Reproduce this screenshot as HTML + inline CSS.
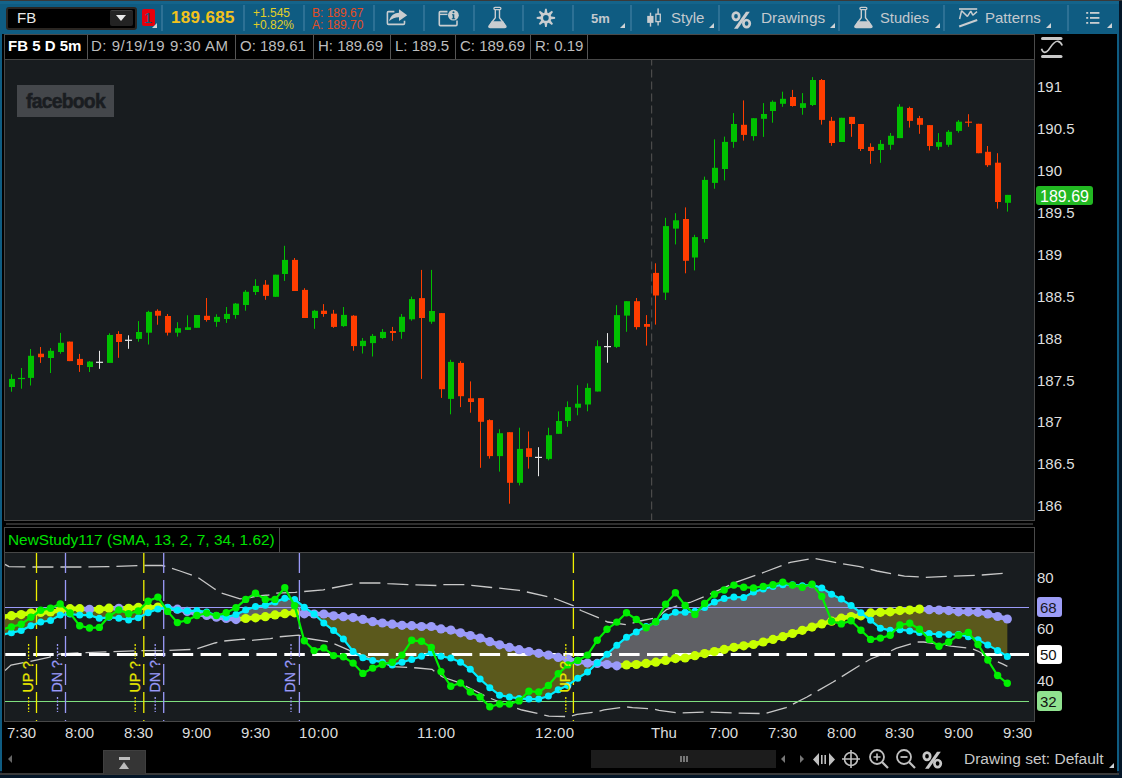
<!DOCTYPE html>
<html><head><meta charset="utf-8">
<style>
*{box-sizing:border-box}
html,body{margin:0;padding:0}
body{width:1122px;height:778px;overflow:hidden;position:relative;background:#041628;font-family:"Liberation Sans",sans-serif}
.a{position:absolute}
.sep{position:absolute;top:5px;width:1.5px;height:26px;background:#2d7195}
.tt{position:absolute;color:#c3c9ce;font-size:15px;white-space:nowrap}
.tri{position:absolute;width:0;height:0;border-left:5px solid transparent;border-bottom:5px solid #cfd3d6}
.cell{position:absolute;top:35px;height:24px;border-right:1px solid #555;color:#bdbdbd;font-size:15px;line-height:22px;white-space:nowrap;padding-left:4px}
.pl{position:absolute;left:1037px;color:#dedede;font-size:15px;white-space:nowrap;line-height:15px}
.tl{position:absolute;top:725px;color:#dcdcdc;font-size:15px;white-space:nowrap;line-height:15px}
</style></head><body>
<!-- top line -->
<div class="a" style="left:0;top:0;width:1122px;height:1px;background:#3a3a3a"></div>
<!-- toolbar -->
<div class="a" style="left:0;top:1px;width:1119px;height:33px;background:#0f5c82"></div>
<div class="a" style="left:0;top:1px;width:1119px;height:3px;background:#14648b"></div>
<!-- main black frame -->
<div class="a" style="left:0;top:34px;width:1119px;height:737px;background:#0f5c82"></div>
<div class="a" style="left:2px;top:34px;width:1115px;height:739px;background:#000"></div>
<div class="a" style="left:0;top:773px;width:1119px;height:2px;background:#3a3a3a"></div>
<div class="a" style="left:0;top:775px;width:1122px;height:3px;background:#041628"></div>

<!-- symbol box -->
<div class="a" style="left:6px;top:7px;width:131px;height:23px;background:#000;border:2px solid #2a2622;border-radius:3px"></div>
<div class="tt" style="left:17px;top:9px;color:#e8e8e8;font-size:15px;line-height:18px">FB</div>
<div class="a" style="left:110px;top:10px;width:23px;height:16px;background:#232323;border-top:1.5px solid #3c3c3c;border-radius:2px"></div>
<div class="a" style="left:116px;top:15px;width:0;height:0;border-left:5.5px solid transparent;border-right:5.5px solid transparent;border-top:6px solid #e8e8e8"></div>
<!-- red badge -->
<div class="a" style="left:142px;top:9px;width:13px;height:17px;background:#e8000c;border-radius:2px"></div>
<div class="a" style="left:144px;top:9px;font-size:15px;line-height:17px;color:#0f5c82">1</div>
<div class="tri" style="left:152px;top:23px;border-left-width:5px;border-bottom-width:5px"></div>
<div class="sep" style="left:161px"></div>
<div class="tt" style="left:171px;top:8px;color:#f2c21c;font-size:17px;font-weight:bold;line-height:20px;letter-spacing:0.35px">189.685</div>
<div class="sep" style="left:243px"></div>
<div class="tt" style="left:253px;top:7px;color:#e2cf26;font-size:12px;line-height:12px">+1.545</div>
<div class="tt" style="left:253px;top:19px;color:#e2cf26;font-size:12px;line-height:12px">+0.82%</div>
<div class="sep" style="left:303px"></div>
<div class="tt" style="left:312px;top:7px;color:#e44c24;font-size:12px;line-height:12px">B: 189.67</div>
<div class="tt" style="left:312px;top:19px;color:#e44c24;font-size:12px;line-height:12px">A: 189.70</div>
<div class="sep" style="left:373px"></div>
<!-- share icon -->
<svg class="a" style="left:380px;top:4px" width="34" height="26" viewBox="380 4 34 26">
<path d="M394.4 11.6 H388.5 Q387.4 11.6 387.4 12.7 V23.3 Q387.4 24.4 388.5 24.4 H403.4 Q404.5 24.4 404.5 23.3 V20.8" fill="none" stroke="#c9cdd0" stroke-width="1.6"/>
<path d="M389 21.2 C390.5 15.5 394.5 12.8 399 12.8 L399 9.3 L407.2 15.2 L399 21 L399 17.2 C395 17.2 392 18.3 389 21.2 Z" fill="#c9cdd0"/>
</svg>
<div class="sep" style="left:423px"></div>
<!-- info window icon -->
<svg class="a" style="left:434px;top:4px" width="30" height="26" viewBox="434 4 30 26">
<path d="M447.5 11.6 H440.4 Q439.3 11.6 439.3 12.7 V24.5 Q439.3 25.6 440.4 25.6 H455.9 Q457 25.6 457 24.5 V20.5" fill="none" stroke="#c9cdd0" stroke-width="1.6"/>
<path d="M439.3 14.4 H447.5" stroke="#c9cdd0" stroke-width="1.4"/>
<circle cx="453.4" cy="15.2" r="5.4" fill="#c9cdd0"/>
<circle cx="453.5" cy="12.2" r="1" fill="#0f5c82"/>
<path d="M452 14.2 H454.3 V18.2 H455.2 V19.3 H451.8 V18.2 H452.7 V15.3 H452 Z" fill="#0f5c82"/>
</svg>
<div class="sep" style="left:473px"></div>
<!-- flask -->
<svg class="a" style="left:486px;top:5px" width="22" height="24" viewBox="486 5 22 24">
<path d="M495.3 9.6 V17.8 L489 26 Q488.3 27.6 490.2 27.6 H504.6 Q506.5 27.6 505.8 26 L499.5 17.8 V9.6" fill="none" stroke="#c9cdd0" stroke-width="1.4"/>
<rect x="493.9" y="7.3" width="7" height="2.3" rx="1.15" fill="none" stroke="#c9cdd0" stroke-width="1.3"/>
<path d="M491.6 21.2 H503.2 L505.8 26 Q506.5 27.6 504.6 27.6 H490.2 Q488.3 27.6 489 26 Z" fill="#c9cdd0"/>
</svg>
<div class="sep" style="left:522px"></div>
<!-- gear -->
<svg class="a" style="left:534px;top:6px" width="24" height="24" viewBox="534 6 24 24">
<polygon points="549.90,19.60 555.10,18.70 555.10,17.10 549.90,16.20" fill="#c9cdd0"/><polygon points="547.53,21.93 551.84,24.97 552.97,23.84 549.93,19.53" fill="#c9cdd0"/><polygon points="544.20,21.90 545.10,27.10 546.70,27.10 547.60,21.90" fill="#c9cdd0"/><polygon points="541.87,19.53 538.83,23.84 539.96,24.97 544.27,21.93" fill="#c9cdd0"/><polygon points="541.90,16.20 536.70,17.10 536.70,18.70 541.90,19.60" fill="#c9cdd0"/><polygon points="544.27,13.87 539.96,10.83 538.83,11.96 541.87,16.27" fill="#c9cdd0"/><polygon points="547.60,13.90 546.70,8.70 545.10,8.70 544.20,13.90" fill="#c9cdd0"/><polygon points="549.93,16.27 552.97,11.96 551.84,10.83 547.53,13.87" fill="#c9cdd0"/>
<circle cx="545.9" cy="17.9" r="4.1" fill="none" stroke="#c9cdd0" stroke-width="2.6"/>
</svg>
<div class="sep" style="left:572px"></div>
<div class="tt" style="left:591px;top:12px;font-size:13px;font-weight:bold;line-height:14px">5m</div>
<div class="tri" style="left:620px;top:23px"></div>
<div class="sep" style="left:630px"></div>
<!-- candle icon -->
<svg class="a" style="left:644px;top:6px" width="20" height="22" viewBox="644 6 20 22">
<rect x="647.2" y="15.9" width="6.3" height="7" fill="#c9cdd0"/><rect x="649.8" y="12.7" width="1.4" height="13.9" fill="#c9cdd0"/>
<rect x="655.9" y="14.2" width="4.4" height="7.4" fill="none" stroke="#c9cdd0" stroke-width="1.3"/><rect x="657.4" y="8.4" width="1.4" height="5.8" fill="#c9cdd0"/><rect x="657.4" y="21.6" width="1.4" height="3.9" fill="#c9cdd0"/>
</svg>
<div class="tt" style="left:671px;top:9px;line-height:18px;font-size:15px">Style</div>
<div class="tri" style="left:709px;top:23px"></div>
<div class="sep" style="left:718px"></div>
<svg class="a" style="left:731px;top:11px" width="22" height="19" viewBox="0 0 22 19">
<ellipse cx="5" cy="5.2" rx="3.2" ry="3.6" fill="none" stroke="#c9cdd0" stroke-width="2.7"/>
<ellipse cx="15.6" cy="12.6" rx="3.2" ry="3.6" fill="none" stroke="#c9cdd0" stroke-width="2.7"/>
<path d="M15 0.8 L18.8 0.8 L6.8 17.8 L3 17.8 Z" fill="#c9cdd0"/>
</svg>
<div class="tt" style="left:761px;top:9px;line-height:18px;font-size:15.4px">Drawings</div>
<div class="tri" style="left:830px;top:23px"></div>
<div class="sep" style="left:838px"></div>
<svg class="a" style="left:852px;top:5px" width="22" height="24" viewBox="486 5 22 24">
<path d="M495.3 9.6 V17.8 L489 26 Q488.3 27.6 490.2 27.6 H504.6 Q506.5 27.6 505.8 26 L499.5 17.8 V9.6" fill="none" stroke="#c9cdd0" stroke-width="1.4"/>
<rect x="493.9" y="7.3" width="7" height="2.3" rx="1.15" fill="none" stroke="#c9cdd0" stroke-width="1.3"/>
<path d="M491.6 21.2 H503.2 L505.8 26 Q506.5 27.6 504.6 27.6 H490.2 Q488.3 27.6 489 26 Z" fill="#c9cdd0"/>
</svg>
<div class="tt" style="left:880px;top:9px;line-height:18px;font-size:14.7px">Studies</div>
<div class="tri" style="left:935px;top:23px"></div>
<div class="sep" style="left:943px"></div>
<!-- patterns icon -->
<svg class="a" style="left:956px;top:6px" width="24" height="24" viewBox="956 6 24 24">
<path d="M959 9 H977.2" stroke="#c9cdd0" stroke-width="1.6"/>
<path d="M959.6 19 L961.6 10.8 L967.4 16.4 L970.8 11.2 L972.8 15.2 L977 11.6" fill="none" stroke="#c9cdd0" stroke-width="1.5" stroke-linejoin="bevel"/>
<path d="M959.2 26.6 L977.2 20" stroke="#c9cdd0" stroke-width="2.1"/>
</svg>
<div class="tt" style="left:985px;top:9px;line-height:18px;font-size:15px">Patterns</div>
<div class="tri" style="left:1046px;top:23px"></div>
<div class="sep" style="left:1067px"></div>
<svg class="a" style="left:1084px;top:10px" width="18" height="16" viewBox="1084 10 18 16">
<g fill="#c9cdd0"><rect x="1086.2" y="12" width="2" height="1.8"/><rect x="1090" y="12" width="9.4" height="1.8"/>
<rect x="1086.2" y="17" width="2" height="1.8"/><rect x="1090" y="17" width="9.4" height="1.8"/>
<rect x="1086.2" y="22" width="2" height="1.8"/><rect x="1090" y="22" width="9.4" height="1.8"/></g>
</svg>
<div class="tri" style="left:1107px;top:23px"></div>

<!-- info bar -->
<div class="a" style="left:4px;top:34px;width:1031px;height:26px;border:1px solid #4a4a4a;background:#000"></div>
<div class="cell" style="left:5px;width:83px;color:#fff;font-weight:bold;padding-left:3px">FB 5 D 5m</div>
<div class="cell" style="left:88px;width:148px;letter-spacing:0.5px;padding-left:3px">D: 9/19/19 9:30 AM</div>
<div class="cell" style="left:236px;width:78px">O: 189.61</div>
<div class="cell" style="left:314px;width:77px">H: 189.69</div>
<div class="cell" style="left:391px;width:65px">L: 189.5</div>
<div class="cell" style="left:456px;width:75px">C: 189.69</div>
<div class="cell" style="left:531px;width:57px">R: 0.19</div>
<!-- right icon -->
<svg class="a" style="left:1039px;top:35px" width="26" height="25" viewBox="0 0 26 25">
<rect x="2" y="2" width="21.5" height="3" rx="1.5" fill="#c8c8c8"/>
<rect x="2" y="20" width="21.5" height="3" rx="1.5" fill="#c8c8c8"/>
<path d="M2.5 13.8 C4 18.5 7 18 9.5 15 C12.5 11 15 5.5 19 6.3 C21.3 6.8 22.5 8.5 23.2 10.5" fill="none" stroke="#c8c8c8" stroke-width="1.7"/>
</svg>

<!-- price chart -->
<div class="a" style="left:4px;top:59px;width:1031px;height:462px;background:#181c1f;border:1px solid #474747"></div>
<div class="a" style="left:17px;top:85px;width:97px;height:32px;background:#44474b"></div>
<div class="a" style="left:26px;top:89px;font-size:21px;font-weight:bold;color:#1a1d21;letter-spacing:-0.8px;line-height:24px;transform:scaleX(0.92);transform-origin:0 0;-webkit-text-stroke:0.6px #1a1d21">facebook</div>

<!-- price labels -->
<div class="pl" style="top:79px">191</div>
<div class="pl" style="top:121px">190.5</div>
<div class="pl" style="top:163px">190</div>
<div class="pl" style="top:205px">189.5</div>
<div class="pl" style="top:247px">189</div>
<div class="pl" style="top:289px">188.5</div>
<div class="pl" style="top:331px">188</div>
<div class="pl" style="top:373px">187.5</div>
<div class="pl" style="top:414px">187</div>
<div class="pl" style="top:456px">186.5</div>
<div class="pl" style="top:498px">186</div>
<div class="a" style="left:1036px;top:186px;width:57px;height:19px;background:#22b822;border-radius:3px"></div>
<div class="pl" style="top:189px;left:1040px;color:#fff;font-size:16px;line-height:16px">189.69</div>

<!-- splitter -->
<div class="a" style="left:6px;top:523px;width:1027px;height:2px;background:#2e2e2e"></div>
<!-- study header -->
<div class="a" style="left:4px;top:527px;width:1031px;height:26px;border:1px solid #4a4a4a;background:#000"></div>
<div class="a" style="left:279px;top:528px;width:1px;height:24px;background:#4a4a4a"></div>
<div class="a" style="left:8px;top:531px;color:#00e000;font-size:15.4px;line-height:18px;white-space:nowrap">NewStudy117 (SMA, 13, 2, 7, 34, 1.62)</div>
<!-- study area -->
<div class="a" style="left:4px;top:552px;width:1031px;height:170px;background:#181c1f;border:1px solid #474747"></div>

<svg class="a" style="left:0;top:0" width="1122" height="778" viewBox="0 0 1122 778">
<line x1="651.6" y1="60" x2="651.6" y2="520" stroke="#4a4a4a" stroke-width="1.2" stroke-dasharray="8 4" stroke-dashoffset="2.5"/>
<rect x="11" y="374.2" width="1" height="17.5" fill="#00c000"/>
<rect x="9" y="378.9" width="6" height="8.1" fill="#00c000"/>
<rect x="21" y="368.0" width="1" height="20.7" fill="#00c000"/>
<rect x="18" y="377.9" width="7" height="1.2" fill="#00c000"/>
<rect x="30" y="349.0" width="1" height="36.5" fill="#00c000"/>
<rect x="28" y="355.8" width="6" height="22.1" fill="#00c000"/>
<rect x="40" y="347.0" width="1" height="15.9" fill="#ff3d00"/>
<rect x="38" y="353.7" width="6" height="3.5" fill="#ff3d00"/>
<rect x="50" y="348.0" width="1" height="25.0" fill="#00c000"/>
<rect x="48" y="350.8" width="6" height="7.2" fill="#00c000"/>
<rect x="60" y="332.9" width="1" height="20.8" fill="#00c000"/>
<rect x="58" y="342.8" width="6" height="9.2" fill="#00c000"/>
<rect x="69" y="341.6" width="1" height="19.5" fill="#ff3d00"/>
<rect x="67" y="341.6" width="6" height="19.5" fill="#ff3d00"/>
<rect x="79" y="353.9" width="1" height="18.0" fill="#ff3d00"/>
<rect x="77" y="358.9" width="6" height="6.1" fill="#ff3d00"/>
<rect x="89" y="361.0" width="1" height="11.0" fill="#00c000"/>
<rect x="87" y="361.6" width="6" height="5.4" fill="#00c000"/>
<rect x="99" y="350.8" width="1" height="18.0" fill="#e8e8e8"/>
<rect x="96" y="361.7" width="7" height="1.2" fill="#e8e8e8"/>
<rect x="109" y="333.3" width="1" height="29.6" fill="#00c000"/>
<rect x="107" y="335.0" width="6" height="27.9" fill="#00c000"/>
<rect x="118" y="331.2" width="1" height="26.6" fill="#ff3d00"/>
<rect x="116" y="334.0" width="6" height="8.0" fill="#ff3d00"/>
<rect x="128" y="335.3" width="1" height="13.5" fill="#e8e8e8"/>
<rect x="125" y="339.7" width="7" height="1.2" fill="#e8e8e8"/>
<rect x="138" y="321.1" width="1" height="20.6" fill="#00c000"/>
<rect x="136" y="332.0" width="6" height="6.9" fill="#00c000"/>
<rect x="148" y="310.8" width="1" height="33.7" fill="#00c000"/>
<rect x="146" y="311.9" width="6" height="20.8" fill="#00c000"/>
<rect x="157" y="309.3" width="1" height="15.4" fill="#ff3d00"/>
<rect x="155" y="310.8" width="6" height="4.9" fill="#ff3d00"/>
<rect x="167" y="314.0" width="1" height="21.5" fill="#ff3d00"/>
<rect x="165" y="316.0" width="6" height="16.7" fill="#ff3d00"/>
<rect x="177" y="322.2" width="1" height="14.4" fill="#00c000"/>
<rect x="175" y="328.2" width="6" height="4.5" fill="#00c000"/>
<rect x="187" y="315.3" width="1" height="14.6" fill="#00c000"/>
<rect x="185" y="327.3" width="6" height="2.6" fill="#00c000"/>
<rect x="196" y="315.0" width="1" height="12.8" fill="#00c000"/>
<rect x="194" y="315.0" width="6" height="12.8" fill="#00c000"/>
<rect x="206" y="298.0" width="1" height="23.6" fill="#ff3d00"/>
<rect x="204" y="315.8" width="6" height="4.2" fill="#ff3d00"/>
<rect x="216" y="314.3" width="1" height="12.5" fill="#00c000"/>
<rect x="214" y="316.9" width="6" height="5.0" fill="#00c000"/>
<rect x="226" y="307.0" width="1" height="15.9" fill="#00c000"/>
<rect x="224" y="313.9" width="6" height="5.1" fill="#00c000"/>
<rect x="235" y="303.0" width="1" height="15.7" fill="#00c000"/>
<rect x="233" y="303.6" width="6" height="11.4" fill="#00c000"/>
<rect x="245" y="290.1" width="1" height="20.6" fill="#00c000"/>
<rect x="243" y="291.8" width="6" height="13.2" fill="#00c000"/>
<rect x="255" y="279.2" width="1" height="15.8" fill="#00c000"/>
<rect x="253" y="285.9" width="6" height="6.1" fill="#00c000"/>
<rect x="265" y="280.1" width="1" height="19.7" fill="#ff3d00"/>
<rect x="263" y="284.7" width="6" height="11.2" fill="#ff3d00"/>
<rect x="275" y="274.7" width="1" height="22.1" fill="#00c000"/>
<rect x="273" y="274.7" width="6" height="22.1" fill="#00c000"/>
<rect x="284" y="245.8" width="1" height="35.1" fill="#00c000"/>
<rect x="282" y="259.9" width="6" height="14.1" fill="#00c000"/>
<rect x="294" y="258.0" width="1" height="33.0" fill="#ff3d00"/>
<rect x="292" y="259.9" width="6" height="31.1" fill="#ff3d00"/>
<rect x="304" y="288.2" width="1" height="29.8" fill="#ff3d00"/>
<rect x="302" y="289.9" width="6" height="28.1" fill="#ff3d00"/>
<rect x="314" y="309.9" width="1" height="18.9" fill="#00c000"/>
<rect x="312" y="310.8" width="6" height="7.2" fill="#00c000"/>
<rect x="323" y="304.1" width="1" height="12.7" fill="#ff3d00"/>
<rect x="321" y="310.7" width="6" height="3.3" fill="#ff3d00"/>
<rect x="333" y="309.9" width="1" height="17.9" fill="#ff3d00"/>
<rect x="331" y="313.7" width="6" height="13.2" fill="#ff3d00"/>
<rect x="343" y="307.0" width="1" height="19.9" fill="#00c000"/>
<rect x="341" y="314.9" width="6" height="11.2" fill="#00c000"/>
<rect x="353" y="315.1" width="1" height="35.6" fill="#ff3d00"/>
<rect x="351" y="315.7" width="6" height="30.4" fill="#ff3d00"/>
<rect x="362" y="338.0" width="1" height="15.5" fill="#00c000"/>
<rect x="360" y="340.8" width="6" height="5.3" fill="#00c000"/>
<rect x="372" y="334.0" width="1" height="22.5" fill="#00c000"/>
<rect x="370" y="335.9" width="6" height="7.2" fill="#00c000"/>
<rect x="382" y="329.0" width="1" height="9.8" fill="#00c000"/>
<rect x="380" y="331.9" width="6" height="6.1" fill="#00c000"/>
<rect x="392" y="326.9" width="1" height="13.9" fill="#ff3d00"/>
<rect x="390" y="331.0" width="6" height="2.0" fill="#ff3d00"/>
<rect x="401" y="314.0" width="1" height="24.8" fill="#00c000"/>
<rect x="399" y="316.8" width="6" height="15.1" fill="#00c000"/>
<rect x="411" y="296.6" width="1" height="24.1" fill="#00c000"/>
<rect x="409" y="299.1" width="6" height="20.2" fill="#00c000"/>
<rect x="421" y="269.9" width="1" height="109.0" fill="#ff3d00"/>
<rect x="419" y="298.1" width="6" height="19.9" fill="#ff3d00"/>
<rect x="431" y="269.9" width="1" height="53.9" fill="#00c000"/>
<rect x="429" y="311.0" width="6" height="10.7" fill="#00c000"/>
<rect x="441" y="313.1" width="1" height="84.8" fill="#ff3d00"/>
<rect x="439" y="313.1" width="6" height="76.1" fill="#ff3d00"/>
<rect x="450" y="359.8" width="1" height="54.5" fill="#00c000"/>
<rect x="448" y="361.9" width="6" height="37.0" fill="#00c000"/>
<rect x="460" y="361.2" width="1" height="45.9" fill="#ff3d00"/>
<rect x="458" y="362.9" width="6" height="33.3" fill="#ff3d00"/>
<rect x="470" y="381.4" width="1" height="31.3" fill="#ff3d00"/>
<rect x="468" y="398.3" width="6" height="3.7" fill="#ff3d00"/>
<rect x="480" y="398.1" width="1" height="69.7" fill="#ff3d00"/>
<rect x="478" y="398.1" width="6" height="23.7" fill="#ff3d00"/>
<rect x="489" y="419.3" width="1" height="39.3" fill="#ff3d00"/>
<rect x="487" y="420.1" width="6" height="36.0" fill="#ff3d00"/>
<rect x="499" y="429.3" width="1" height="42.3" fill="#00c000"/>
<rect x="497" y="433.2" width="6" height="22.9" fill="#00c000"/>
<rect x="509" y="432.2" width="1" height="71.5" fill="#ff3d00"/>
<rect x="507" y="432.2" width="6" height="50.6" fill="#ff3d00"/>
<rect x="519" y="427.7" width="1" height="57.7" fill="#00c000"/>
<rect x="517" y="448.9" width="6" height="33.9" fill="#00c000"/>
<rect x="528" y="431.5" width="1" height="37.1" fill="#ff3d00"/>
<rect x="526" y="448.2" width="6" height="8.7" fill="#ff3d00"/>
<rect x="538" y="447.2" width="1" height="29.0" fill="#e8e8e8"/>
<rect x="535" y="456.8" width="7" height="1.2" fill="#e8e8e8"/>
<rect x="548" y="427.7" width="1" height="32.6" fill="#00c000"/>
<rect x="546" y="435.2" width="6" height="23.7" fill="#00c000"/>
<rect x="558" y="411.4" width="1" height="22.4" fill="#00c000"/>
<rect x="556" y="421.0" width="6" height="12.8" fill="#00c000"/>
<rect x="567" y="401.4" width="1" height="25.4" fill="#00c000"/>
<rect x="565" y="407.1" width="6" height="13.9" fill="#00c000"/>
<rect x="577" y="385.2" width="1" height="30.1" fill="#00c000"/>
<rect x="575" y="403.7" width="6" height="4.0" fill="#00c000"/>
<rect x="587" y="383.4" width="1" height="27.9" fill="#00c000"/>
<rect x="585" y="387.9" width="6" height="16.6" fill="#00c000"/>
<rect x="597" y="340.3" width="1" height="51.2" fill="#00c000"/>
<rect x="595" y="346.2" width="6" height="45.3" fill="#00c000"/>
<rect x="607" y="333.1" width="1" height="29.6" fill="#e8e8e8"/>
<rect x="604" y="346.0" width="7" height="1.2" fill="#e8e8e8"/>
<rect x="616" y="305.2" width="1" height="42.8" fill="#00c000"/>
<rect x="614" y="315.1" width="6" height="31.8" fill="#00c000"/>
<rect x="626" y="301.2" width="1" height="30.6" fill="#00c000"/>
<rect x="624" y="301.2" width="6" height="14.4" fill="#00c000"/>
<rect x="636" y="298.0" width="1" height="31.5" fill="#ff3d00"/>
<rect x="634" y="301.2" width="6" height="25.9" fill="#ff3d00"/>
<rect x="646" y="315.1" width="1" height="30.5" fill="#ff3d00"/>
<rect x="644" y="324.0" width="6" height="2.8" fill="#ff3d00"/>
<rect x="655" y="263.3" width="1" height="61.3" fill="#ff3d00"/>
<rect x="653" y="272.9" width="6" height="22.6" fill="#ff3d00"/>
<rect x="665" y="217.8" width="1" height="82.2" fill="#00c000"/>
<rect x="663" y="226.1" width="6" height="66.5" fill="#00c000"/>
<rect x="675" y="213.2" width="1" height="31.2" fill="#00c000"/>
<rect x="673" y="220.3" width="6" height="8.3" fill="#00c000"/>
<rect x="685" y="207.4" width="1" height="65.9" fill="#ff3d00"/>
<rect x="683" y="219.0" width="6" height="41.8" fill="#ff3d00"/>
<rect x="694" y="234.8" width="1" height="35.6" fill="#00c000"/>
<rect x="692" y="237.1" width="6" height="20.4" fill="#00c000"/>
<rect x="704" y="176.6" width="1" height="65.9" fill="#00c000"/>
<rect x="702" y="179.9" width="6" height="59.1" fill="#00c000"/>
<rect x="714" y="139.4" width="1" height="49.3" fill="#00c000"/>
<rect x="712" y="167.8" width="6" height="15.1" fill="#00c000"/>
<rect x="724" y="136.6" width="1" height="43.8" fill="#00c000"/>
<rect x="722" y="141.9" width="6" height="27.1" fill="#00c000"/>
<rect x="733" y="113.1" width="1" height="34.7" fill="#00c000"/>
<rect x="731" y="124.0" width="6" height="17.9" fill="#00c000"/>
<rect x="743" y="100.4" width="1" height="40.2" fill="#ff3d00"/>
<rect x="741" y="124.8" width="6" height="10.1" fill="#ff3d00"/>
<rect x="753" y="118.2" width="1" height="22.4" fill="#00c000"/>
<rect x="751" y="118.2" width="6" height="17.9" fill="#00c000"/>
<rect x="763" y="103.1" width="1" height="33.8" fill="#00c000"/>
<rect x="761" y="114.0" width="6" height="4.8" fill="#00c000"/>
<rect x="772" y="100.4" width="1" height="22.3" fill="#00c000"/>
<rect x="770" y="101.8" width="6" height="9.2" fill="#00c000"/>
<rect x="782" y="91.7" width="1" height="15.1" fill="#00c000"/>
<rect x="780" y="98.8" width="6" height="5.0" fill="#00c000"/>
<rect x="792" y="89.9" width="1" height="16.7" fill="#ff3d00"/>
<rect x="790" y="97.0" width="6" height="9.0" fill="#ff3d00"/>
<rect x="802" y="93.1" width="1" height="21.6" fill="#00c000"/>
<rect x="800" y="103.2" width="6" height="4.7" fill="#00c000"/>
<rect x="812" y="77.1" width="1" height="28.9" fill="#00c000"/>
<rect x="810" y="80.0" width="6" height="25.0" fill="#00c000"/>
<rect x="821" y="79.0" width="1" height="45.6" fill="#ff3d00"/>
<rect x="819" y="80.0" width="6" height="39.9" fill="#ff3d00"/>
<rect x="831" y="116.9" width="1" height="28.9" fill="#ff3d00"/>
<rect x="829" y="120.8" width="6" height="22.2" fill="#ff3d00"/>
<rect x="841" y="117.8" width="1" height="24.2" fill="#00c000"/>
<rect x="839" y="117.8" width="6" height="24.2" fill="#00c000"/>
<rect x="851" y="116.9" width="1" height="19.9" fill="#ff3d00"/>
<rect x="849" y="116.9" width="6" height="7.1" fill="#ff3d00"/>
<rect x="860" y="124.0" width="1" height="27.0" fill="#ff3d00"/>
<rect x="858" y="124.0" width="6" height="25.0" fill="#ff3d00"/>
<rect x="870" y="143.3" width="1" height="20.5" fill="#ff3d00"/>
<rect x="868" y="146.9" width="6" height="4.1" fill="#ff3d00"/>
<rect x="880" y="140.0" width="1" height="22.8" fill="#00c000"/>
<rect x="878" y="143.9" width="6" height="6.1" fill="#00c000"/>
<rect x="890" y="133.0" width="1" height="16.7" fill="#00c000"/>
<rect x="888" y="135.8" width="6" height="9.0" fill="#00c000"/>
<rect x="899" y="104.2" width="1" height="33.9" fill="#00c000"/>
<rect x="897" y="106.7" width="6" height="31.4" fill="#00c000"/>
<rect x="909" y="106.7" width="1" height="20.9" fill="#ff3d00"/>
<rect x="907" y="108.0" width="6" height="12.9" fill="#ff3d00"/>
<rect x="919" y="115.9" width="1" height="17.9" fill="#ff3d00"/>
<rect x="917" y="118.1" width="6" height="6.7" fill="#ff3d00"/>
<rect x="929" y="125.1" width="1" height="25.4" fill="#ff3d00"/>
<rect x="927" y="125.1" width="6" height="20.9" fill="#ff3d00"/>
<rect x="938" y="133.1" width="1" height="16.7" fill="#00c000"/>
<rect x="936" y="142.1" width="6" height="4.7" fill="#00c000"/>
<rect x="948" y="130.1" width="1" height="16.7" fill="#00c000"/>
<rect x="946" y="131.8" width="6" height="13.0" fill="#00c000"/>
<rect x="958" y="120.1" width="1" height="12.5" fill="#00c000"/>
<rect x="956" y="121.7" width="6" height="9.2" fill="#00c000"/>
<rect x="968" y="114.2" width="1" height="12.6" fill="#ff3d00"/>
<rect x="965" y="121.6" width="7" height="1.2" fill="#ff3d00"/>
<rect x="978" y="123.8" width="1" height="29.4" fill="#ff3d00"/>
<rect x="976" y="123.8" width="6" height="29.4" fill="#ff3d00"/>
<rect x="987" y="146.0" width="1" height="20.9" fill="#ff3d00"/>
<rect x="985" y="151.8" width="6" height="13.4" fill="#ff3d00"/>
<rect x="997" y="153.2" width="1" height="55.4" fill="#ff3d00"/>
<rect x="995" y="162.7" width="6" height="39.3" fill="#ff3d00"/>
<rect x="1007" y="194.9" width="1" height="16.7" fill="#00c000"/>
<rect x="1005" y="194.9" width="6" height="7.9" fill="#00c000"/>
<clipPath id="sc"><rect x="5" y="553" width="1029" height="168"/></clipPath>
<g clip-path="url(#sc)">
<polygon points="1.64,616.80 11.40,615.70 21.16,614.60 30.93,613.00 40.69,612.50 50.46,612.00 60.22,610.30 69.98,608.70 79.75,608.70 89.51,609.30 99.28,609.30 109.04,608.20 118.80,608.30 128.57,608.30 138.33,607.40 148.10,607.80 157.86,607.00 164.49,607.88 164.49,607.88 157.86,608.90 148.10,612.80 138.33,617.80 128.57,619.90 118.80,618.20 109.04,617.30 99.28,618.30 89.51,615.10 79.75,615.10 69.98,614.00 60.22,615.10 50.46,620.50 40.69,622.00 30.93,625.80 21.16,630.60 11.40,632.80 1.64,635.00" fill="#5b591c"/>
<polygon points="164.49,607.88 167.62,608.30 172.51,608.75 172.51,608.75 167.62,607.40 164.49,607.88" fill="#5f6065"/>
<polygon points="172.51,608.75 177.39,609.20 184.15,610.72 184.15,610.72 177.39,610.10 172.51,608.75" fill="#5b591c"/>
<polygon points="184.15,610.72 187.15,611.40 196.92,613.70 206.68,615.50 216.44,617.20 226.21,618.50 235.97,619.60 245.74,618.50 255.50,617.80 265.26,616.70 275.03,614.90 284.79,613.70 294.56,612.80 304.32,613.80 314.08,614.00 314.08,614.00 304.32,607.20 294.56,599.40 284.79,598.20 275.03,602.10 265.26,605.30 255.50,606.50 245.74,610.10 235.97,614.60 226.21,617.20 216.44,615.50 206.68,611.90 196.92,610.60 187.15,611.00 184.15,610.72" fill="#5f6065"/>
<polygon points="314.08,614.00 314.08,614.00 323.85,614.00 333.61,615.80 343.38,616.70 353.14,617.60 362.90,619.40 372.67,621.70 382.43,623.00 392.20,624.20 401.96,625.30 411.72,625.70 421.49,626.50 431.25,626.50 441.02,628.90 450.78,630.10 460.54,632.80 470.31,635.50 480.07,638.10 489.84,641.70 499.60,644.80 509.36,647.40 519.13,649.70 528.89,651.50 538.66,653.30 548.42,655.10 558.18,657.40 567.95,659.20 577.71,661.30 587.48,663.10 596.92,663.39 596.92,663.39 587.48,672.00 577.71,678.20 567.95,685.40 558.18,689.80 548.42,696.10 538.66,699.10 528.89,699.10 519.13,698.40 509.36,697.00 499.60,695.20 489.84,687.70 480.07,679.10 470.31,669.30 460.54,662.20 450.78,658.10 441.02,656.30 431.25,652.70 421.49,656.30 411.72,659.50 401.96,662.20 392.20,664.90 382.43,662.20 372.67,660.40 362.90,657.70 353.14,651.50 343.38,639.00 333.61,630.60 323.85,623.00 314.08,614.00 314.08,614.00" fill="#5b591c"/>
<polygon points="596.92,663.39 597.24,663.40 607.00,664.50 616.77,665.80 626.53,664.90 636.30,664.50 646.06,663.40 655.82,662.20 665.59,660.40 675.35,658.60 685.12,658.00 694.88,655.70 704.64,653.60 714.41,651.50 724.17,649.40 733.94,647.30 743.70,645.80 753.46,644.50 763.23,642.00 772.99,639.40 782.76,636.70 792.52,633.50 802.28,630.30 812.05,627.10 821.81,623.90 831.58,621.20 841.34,618.20 851.10,616.50 860.87,615.80 863.75,614.94 863.75,614.94 860.87,612.70 851.10,605.50 841.34,599.10 831.58,594.20 821.81,587.90 812.05,584.70 802.28,585.80 792.52,584.70 782.76,584.70 772.99,586.40 763.23,589.00 753.46,592.10 743.70,597.40 733.94,597.00 724.17,598.50 714.41,602.10 704.64,607.60 694.88,611.20 685.12,612.30 675.35,612.30 665.59,616.70 655.82,622.10 646.06,626.50 636.30,631.90 626.53,637.20 616.77,645.30 607.00,654.20 597.24,663.10 596.92,663.39" fill="#5f6065"/>
<polygon points="863.75,614.94 870.63,612.90 880.40,612.30 890.16,611.80 899.92,610.60 909.69,610.10 919.45,609.10 929.22,609.70 938.98,610.10 948.74,610.60 958.51,611.80 968.27,611.80 978.04,612.30 987.80,614.00 997.56,616.50 1007.33,619.00 1007.33,656.40 997.56,650.40 987.80,645.10 978.04,639.80 968.27,636.70 958.51,634.50 948.74,634.50 938.98,634.50 929.22,633.50 919.45,632.40 909.69,630.90 899.92,629.70 890.16,630.30 880.40,628.20 870.63,620.30 863.75,614.94" fill="#5b591c"/>
<polyline points="5,564.4 9,566.6 30,567 50,567 80,567 108,566.6 140,565.5 162,565.5 170,567.7 180,571 197.3,577 214.3,588.7 220.5,592.8 240,598.9 250,597.5 258,595.8 268.6,595 275.8,593.2 295.4,592.3 304,591.5 323.4,589.8 332.3,588 352.4,584.2 359,583 380,583 388,583.7 408,584.6 416,584.9 437,585.5 443.7,584.6 465,584.6 471.6,585.3 491.6,587.5 499.5,588.2 519.5,590.4 527,592 549,597 556,599 574,606 581,610.5 600.5,618.5 607.6,622 627,624.8 640,621 657.5,617.6 666.5,609.6 680,604.8 690,602.5 707.6,595.3 735,582.6 764.8,572 790.3,562.4 813.6,558.2 841.2,563.5 860,566.7 877,571 898,575 904.5,576.2 925.7,577.3 953,576.2 982,575 1007.4,573" fill="none" stroke="#c8c8c8" stroke-width="1.3" stroke-dasharray="21 7"/>
<polyline points="5,670.6 11,665 28.8,661.7 48.7,657.3 59.7,654 79.6,652.9 106,651.8 141.6,650.7 161.5,650.7 195.6,649.3 215,643 224,641 243.7,639.2 250.8,640.4 270.4,638.6 279,636.8 299,635.2 307.6,638.5 328.6,641.8 335.6,644.4 350,650.6 370,658 392.7,666.6 410.5,667.5 417.6,668 432,669.3 435.5,672.3 442.6,677 456.9,681.8 467.6,687 487,697 505,704 522,710 541.7,714.4 548.8,716.2 570,716.6 577,714.4 597,711.7 604,709.8 625.5,706.8 632.6,707.6 654,709 659,710.3 679,713 707.6,712 737,713 764.8,713.6 786,707.7 807,697 832.7,682.3 860,665.3 870.6,659 889.7,651.5 896,648.3 917,642 923.6,642 944.8,645 951,646.2 971.3,648.3 978.8,651.5 995.7,661 1003,664.2 1007.4,666.3" fill="none" stroke="#c8c8c8" stroke-width="1.3" stroke-dasharray="21 7"/>
<line x1="5" y1="607.5" x2="1029" y2="607.5" stroke="#9a9af8" stroke-width="1.2"/>
<line x1="5" y1="701.5" x2="1029" y2="701.5" stroke="#7fe07f" stroke-width="1.2"/>
<line x1="5.3" y1="654.6" x2="1029" y2="654.6" stroke="#ffffff" stroke-width="3" stroke-dasharray="20.5 7.4"/>
<line x1="36.5" y1="552" x2="36.5" y2="721" stroke="#f0f000" stroke-width="1.3" stroke-dasharray="21 7"/>
<line x1="65.5" y1="552" x2="65.5" y2="721" stroke="#9a9af8" stroke-width="1.3" stroke-dasharray="21 7"/>
<line x1="143.8" y1="552" x2="143.8" y2="721" stroke="#f0f000" stroke-width="1.3" stroke-dasharray="21 7"/>
<line x1="163.7" y1="552" x2="163.7" y2="721" stroke="#9a9af8" stroke-width="1.3" stroke-dasharray="21 7"/>
<line x1="299.4" y1="552" x2="299.4" y2="721" stroke="#9a9af8" stroke-width="1.3" stroke-dasharray="21 7"/>
<line x1="573.4" y1="552" x2="573.4" y2="721" stroke="#f0f000" stroke-width="1.3" stroke-dasharray="21 7"/>
<line x1="1.6" y1="616.8" x2="11.4" y2="615.7" stroke="#c8ff00" stroke-width="4.5"/>
<line x1="11.4" y1="615.7" x2="21.2" y2="614.6" stroke="#c8ff00" stroke-width="4.5"/>
<line x1="21.2" y1="614.6" x2="30.9" y2="613.0" stroke="#c8ff00" stroke-width="4.5"/>
<line x1="30.9" y1="613.0" x2="40.7" y2="612.5" stroke="#c8ff00" stroke-width="4.5"/>
<line x1="40.7" y1="612.5" x2="50.5" y2="612.0" stroke="#c8ff00" stroke-width="4.5"/>
<line x1="50.5" y1="612.0" x2="60.2" y2="610.3" stroke="#c8ff00" stroke-width="4.5"/>
<line x1="60.2" y1="610.3" x2="70.0" y2="608.7" stroke="#c8ff00" stroke-width="4.5"/>
<line x1="70.0" y1="608.7" x2="79.7" y2="608.7" stroke="#c8ff00" stroke-width="4.5"/>
<line x1="79.7" y1="608.7" x2="89.5" y2="609.3" stroke="#9a9af8" stroke-width="4.5"/>
<line x1="89.5" y1="609.3" x2="99.3" y2="609.3" stroke="#c8ff00" stroke-width="4.5"/>
<line x1="99.3" y1="609.3" x2="109.0" y2="608.2" stroke="#c8ff00" stroke-width="4.5"/>
<line x1="109.0" y1="608.2" x2="118.8" y2="608.3" stroke="#9a9af8" stroke-width="4.5"/>
<line x1="118.8" y1="608.3" x2="128.6" y2="608.3" stroke="#c8ff00" stroke-width="4.5"/>
<line x1="128.6" y1="608.3" x2="138.3" y2="607.4" stroke="#c8ff00" stroke-width="4.5"/>
<line x1="138.3" y1="607.4" x2="148.1" y2="607.8" stroke="#c8ff00" stroke-width="4.5"/>
<line x1="148.1" y1="607.8" x2="157.9" y2="607.0" stroke="#c8ff00" stroke-width="4.5"/>
<line x1="157.9" y1="607.0" x2="167.6" y2="608.3" stroke="#9a9af8" stroke-width="4.5"/>
<line x1="167.6" y1="608.3" x2="177.4" y2="609.2" stroke="#9a9af8" stroke-width="4.5"/>
<line x1="177.4" y1="609.2" x2="187.2" y2="611.4" stroke="#9a9af8" stroke-width="4.5"/>
<line x1="187.2" y1="611.4" x2="196.9" y2="613.7" stroke="#9a9af8" stroke-width="4.5"/>
<line x1="196.9" y1="613.7" x2="206.7" y2="615.5" stroke="#9a9af8" stroke-width="4.5"/>
<line x1="206.7" y1="615.5" x2="216.4" y2="617.2" stroke="#9a9af8" stroke-width="4.5"/>
<line x1="216.4" y1="617.2" x2="226.2" y2="618.5" stroke="#9a9af8" stroke-width="4.5"/>
<line x1="226.2" y1="618.5" x2="236.0" y2="619.6" stroke="#9a9af8" stroke-width="4.5"/>
<line x1="236.0" y1="619.6" x2="245.7" y2="618.5" stroke="#c8ff00" stroke-width="4.5"/>
<line x1="245.7" y1="618.5" x2="255.5" y2="617.8" stroke="#c8ff00" stroke-width="4.5"/>
<line x1="255.5" y1="617.8" x2="265.3" y2="616.7" stroke="#c8ff00" stroke-width="4.5"/>
<line x1="265.3" y1="616.7" x2="275.0" y2="614.9" stroke="#c8ff00" stroke-width="4.5"/>
<line x1="275.0" y1="614.9" x2="284.8" y2="613.7" stroke="#c8ff00" stroke-width="4.5"/>
<line x1="284.8" y1="613.7" x2="294.6" y2="612.8" stroke="#c8ff00" stroke-width="4.5"/>
<line x1="294.6" y1="612.8" x2="304.3" y2="613.8" stroke="#9a9af8" stroke-width="4.5"/>
<line x1="304.3" y1="613.8" x2="314.1" y2="614.0" stroke="#9a9af8" stroke-width="4.5"/>
<line x1="314.1" y1="614.0" x2="323.8" y2="614.0" stroke="#9a9af8" stroke-width="4.5"/>
<line x1="323.8" y1="614.0" x2="333.6" y2="615.8" stroke="#9a9af8" stroke-width="4.5"/>
<line x1="333.6" y1="615.8" x2="343.4" y2="616.7" stroke="#9a9af8" stroke-width="4.5"/>
<line x1="343.4" y1="616.7" x2="353.1" y2="617.6" stroke="#9a9af8" stroke-width="4.5"/>
<line x1="353.1" y1="617.6" x2="362.9" y2="619.4" stroke="#9a9af8" stroke-width="4.5"/>
<line x1="362.9" y1="619.4" x2="372.7" y2="621.7" stroke="#9a9af8" stroke-width="4.5"/>
<line x1="372.7" y1="621.7" x2="382.4" y2="623.0" stroke="#9a9af8" stroke-width="4.5"/>
<line x1="382.4" y1="623.0" x2="392.2" y2="624.2" stroke="#9a9af8" stroke-width="4.5"/>
<line x1="392.2" y1="624.2" x2="402.0" y2="625.3" stroke="#9a9af8" stroke-width="4.5"/>
<line x1="402.0" y1="625.3" x2="411.7" y2="625.7" stroke="#9a9af8" stroke-width="4.5"/>
<line x1="411.7" y1="625.7" x2="421.5" y2="626.5" stroke="#9a9af8" stroke-width="4.5"/>
<line x1="421.5" y1="626.5" x2="431.3" y2="626.5" stroke="#9a9af8" stroke-width="4.5"/>
<line x1="431.3" y1="626.5" x2="441.0" y2="628.9" stroke="#9a9af8" stroke-width="4.5"/>
<line x1="441.0" y1="628.9" x2="450.8" y2="630.1" stroke="#9a9af8" stroke-width="4.5"/>
<line x1="450.8" y1="630.1" x2="460.5" y2="632.8" stroke="#9a9af8" stroke-width="4.5"/>
<line x1="460.5" y1="632.8" x2="470.3" y2="635.5" stroke="#9a9af8" stroke-width="4.5"/>
<line x1="470.3" y1="635.5" x2="480.1" y2="638.1" stroke="#9a9af8" stroke-width="4.5"/>
<line x1="480.1" y1="638.1" x2="489.8" y2="641.7" stroke="#9a9af8" stroke-width="4.5"/>
<line x1="489.8" y1="641.7" x2="499.6" y2="644.8" stroke="#9a9af8" stroke-width="4.5"/>
<line x1="499.6" y1="644.8" x2="509.4" y2="647.4" stroke="#9a9af8" stroke-width="4.5"/>
<line x1="509.4" y1="647.4" x2="519.1" y2="649.7" stroke="#9a9af8" stroke-width="4.5"/>
<line x1="519.1" y1="649.7" x2="528.9" y2="651.5" stroke="#9a9af8" stroke-width="4.5"/>
<line x1="528.9" y1="651.5" x2="538.7" y2="653.3" stroke="#9a9af8" stroke-width="4.5"/>
<line x1="538.7" y1="653.3" x2="548.4" y2="655.1" stroke="#9a9af8" stroke-width="4.5"/>
<line x1="548.4" y1="655.1" x2="558.2" y2="657.4" stroke="#9a9af8" stroke-width="4.5"/>
<line x1="558.2" y1="657.4" x2="567.9" y2="659.2" stroke="#9a9af8" stroke-width="4.5"/>
<line x1="567.9" y1="659.2" x2="577.7" y2="661.3" stroke="#9a9af8" stroke-width="4.5"/>
<line x1="577.7" y1="661.3" x2="587.5" y2="663.1" stroke="#9a9af8" stroke-width="4.5"/>
<line x1="587.5" y1="663.1" x2="597.2" y2="663.4" stroke="#9a9af8" stroke-width="4.5"/>
<line x1="597.2" y1="663.4" x2="607.0" y2="664.5" stroke="#9a9af8" stroke-width="4.5"/>
<line x1="607.0" y1="664.5" x2="616.8" y2="665.8" stroke="#9a9af8" stroke-width="4.5"/>
<line x1="616.8" y1="665.8" x2="626.5" y2="664.9" stroke="#c8ff00" stroke-width="4.5"/>
<line x1="626.5" y1="664.9" x2="636.3" y2="664.5" stroke="#c8ff00" stroke-width="4.5"/>
<line x1="636.3" y1="664.5" x2="646.1" y2="663.4" stroke="#c8ff00" stroke-width="4.5"/>
<line x1="646.1" y1="663.4" x2="655.8" y2="662.2" stroke="#c8ff00" stroke-width="4.5"/>
<line x1="655.8" y1="662.2" x2="665.6" y2="660.4" stroke="#c8ff00" stroke-width="4.5"/>
<line x1="665.6" y1="660.4" x2="675.4" y2="658.6" stroke="#c8ff00" stroke-width="4.5"/>
<line x1="675.4" y1="658.6" x2="685.1" y2="658.0" stroke="#c8ff00" stroke-width="4.5"/>
<line x1="685.1" y1="658.0" x2="694.9" y2="655.7" stroke="#c8ff00" stroke-width="4.5"/>
<line x1="694.9" y1="655.7" x2="704.6" y2="653.6" stroke="#c8ff00" stroke-width="4.5"/>
<line x1="704.6" y1="653.6" x2="714.4" y2="651.5" stroke="#c8ff00" stroke-width="4.5"/>
<line x1="714.4" y1="651.5" x2="724.2" y2="649.4" stroke="#c8ff00" stroke-width="4.5"/>
<line x1="724.2" y1="649.4" x2="733.9" y2="647.3" stroke="#c8ff00" stroke-width="4.5"/>
<line x1="733.9" y1="647.3" x2="743.7" y2="645.8" stroke="#c8ff00" stroke-width="4.5"/>
<line x1="743.7" y1="645.8" x2="753.5" y2="644.5" stroke="#c8ff00" stroke-width="4.5"/>
<line x1="753.5" y1="644.5" x2="763.2" y2="642.0" stroke="#c8ff00" stroke-width="4.5"/>
<line x1="763.2" y1="642.0" x2="773.0" y2="639.4" stroke="#c8ff00" stroke-width="4.5"/>
<line x1="773.0" y1="639.4" x2="782.8" y2="636.7" stroke="#c8ff00" stroke-width="4.5"/>
<line x1="782.8" y1="636.7" x2="792.5" y2="633.5" stroke="#c8ff00" stroke-width="4.5"/>
<line x1="792.5" y1="633.5" x2="802.3" y2="630.3" stroke="#c8ff00" stroke-width="4.5"/>
<line x1="802.3" y1="630.3" x2="812.0" y2="627.1" stroke="#c8ff00" stroke-width="4.5"/>
<line x1="812.0" y1="627.1" x2="821.8" y2="623.9" stroke="#c8ff00" stroke-width="4.5"/>
<line x1="821.8" y1="623.9" x2="831.6" y2="621.2" stroke="#c8ff00" stroke-width="4.5"/>
<line x1="831.6" y1="621.2" x2="841.3" y2="618.2" stroke="#c8ff00" stroke-width="4.5"/>
<line x1="841.3" y1="618.2" x2="851.1" y2="616.5" stroke="#c8ff00" stroke-width="4.5"/>
<line x1="851.1" y1="616.5" x2="860.9" y2="615.8" stroke="#c8ff00" stroke-width="4.5"/>
<line x1="860.9" y1="615.8" x2="870.6" y2="612.9" stroke="#c8ff00" stroke-width="4.5"/>
<line x1="870.6" y1="612.9" x2="880.4" y2="612.3" stroke="#c8ff00" stroke-width="4.5"/>
<line x1="880.4" y1="612.3" x2="890.2" y2="611.8" stroke="#c8ff00" stroke-width="4.5"/>
<line x1="890.2" y1="611.8" x2="899.9" y2="610.6" stroke="#c8ff00" stroke-width="4.5"/>
<line x1="899.9" y1="610.6" x2="909.7" y2="610.1" stroke="#c8ff00" stroke-width="4.5"/>
<line x1="909.7" y1="610.1" x2="919.5" y2="609.1" stroke="#c8ff00" stroke-width="4.5"/>
<line x1="919.5" y1="609.1" x2="929.2" y2="609.7" stroke="#9a9af8" stroke-width="4.5"/>
<line x1="929.2" y1="609.7" x2="939.0" y2="610.1" stroke="#9a9af8" stroke-width="4.5"/>
<line x1="939.0" y1="610.1" x2="948.7" y2="610.6" stroke="#9a9af8" stroke-width="4.5"/>
<line x1="948.7" y1="610.6" x2="958.5" y2="611.8" stroke="#9a9af8" stroke-width="4.5"/>
<line x1="958.5" y1="611.8" x2="968.3" y2="611.8" stroke="#9a9af8" stroke-width="4.5"/>
<line x1="968.3" y1="611.8" x2="978.0" y2="612.3" stroke="#9a9af8" stroke-width="4.5"/>
<line x1="978.0" y1="612.3" x2="987.8" y2="614.0" stroke="#9a9af8" stroke-width="4.5"/>
<line x1="987.8" y1="614.0" x2="997.6" y2="616.5" stroke="#9a9af8" stroke-width="4.5"/>
<line x1="997.6" y1="616.5" x2="1007.3" y2="619.0" stroke="#9a9af8" stroke-width="4.5"/>
<circle cx="1.6" cy="616.8" r="4.6" fill="#c8ff00"/>
<circle cx="11.4" cy="615.7" r="4.6" fill="#c8ff00"/>
<circle cx="21.2" cy="614.6" r="4.6" fill="#c8ff00"/>
<circle cx="30.9" cy="613.0" r="4.6" fill="#c8ff00"/>
<circle cx="40.7" cy="612.5" r="4.6" fill="#c8ff00"/>
<circle cx="50.5" cy="612.0" r="4.6" fill="#c8ff00"/>
<circle cx="60.2" cy="610.3" r="4.6" fill="#c8ff00"/>
<circle cx="70.0" cy="608.7" r="4.6" fill="#c8ff00"/>
<circle cx="79.7" cy="608.7" r="4.6" fill="#c8ff00"/>
<circle cx="89.5" cy="609.3" r="4.6" fill="#9a9af8"/>
<circle cx="99.3" cy="609.3" r="4.6" fill="#c8ff00"/>
<circle cx="109.0" cy="608.2" r="4.6" fill="#c8ff00"/>
<circle cx="118.8" cy="608.3" r="4.6" fill="#9a9af8"/>
<circle cx="128.6" cy="608.3" r="4.6" fill="#c8ff00"/>
<circle cx="138.3" cy="607.4" r="4.6" fill="#c8ff00"/>
<circle cx="148.1" cy="607.8" r="4.6" fill="#c8ff00"/>
<circle cx="157.9" cy="607.0" r="4.6" fill="#c8ff00"/>
<circle cx="167.6" cy="608.3" r="4.6" fill="#9a9af8"/>
<circle cx="177.4" cy="609.2" r="4.6" fill="#9a9af8"/>
<circle cx="187.2" cy="611.4" r="4.6" fill="#9a9af8"/>
<circle cx="196.9" cy="613.7" r="4.6" fill="#9a9af8"/>
<circle cx="206.7" cy="615.5" r="4.6" fill="#9a9af8"/>
<circle cx="216.4" cy="617.2" r="4.6" fill="#9a9af8"/>
<circle cx="226.2" cy="618.5" r="4.6" fill="#9a9af8"/>
<circle cx="236.0" cy="619.6" r="4.6" fill="#9a9af8"/>
<circle cx="245.7" cy="618.5" r="4.6" fill="#c8ff00"/>
<circle cx="255.5" cy="617.8" r="4.6" fill="#c8ff00"/>
<circle cx="265.3" cy="616.7" r="4.6" fill="#c8ff00"/>
<circle cx="275.0" cy="614.9" r="4.6" fill="#c8ff00"/>
<circle cx="284.8" cy="613.7" r="4.6" fill="#c8ff00"/>
<circle cx="294.6" cy="612.8" r="4.6" fill="#c8ff00"/>
<circle cx="304.3" cy="613.8" r="4.6" fill="#9a9af8"/>
<circle cx="314.1" cy="614.0" r="4.6" fill="#9a9af8"/>
<circle cx="323.8" cy="614.0" r="4.6" fill="#9a9af8"/>
<circle cx="333.6" cy="615.8" r="4.6" fill="#9a9af8"/>
<circle cx="343.4" cy="616.7" r="4.6" fill="#9a9af8"/>
<circle cx="353.1" cy="617.6" r="4.6" fill="#9a9af8"/>
<circle cx="362.9" cy="619.4" r="4.6" fill="#9a9af8"/>
<circle cx="372.7" cy="621.7" r="4.6" fill="#9a9af8"/>
<circle cx="382.4" cy="623.0" r="4.6" fill="#9a9af8"/>
<circle cx="392.2" cy="624.2" r="4.6" fill="#9a9af8"/>
<circle cx="402.0" cy="625.3" r="4.6" fill="#9a9af8"/>
<circle cx="411.7" cy="625.7" r="4.6" fill="#9a9af8"/>
<circle cx="421.5" cy="626.5" r="4.6" fill="#9a9af8"/>
<circle cx="431.3" cy="626.5" r="4.6" fill="#9a9af8"/>
<circle cx="441.0" cy="628.9" r="4.6" fill="#9a9af8"/>
<circle cx="450.8" cy="630.1" r="4.6" fill="#9a9af8"/>
<circle cx="460.5" cy="632.8" r="4.6" fill="#9a9af8"/>
<circle cx="470.3" cy="635.5" r="4.6" fill="#9a9af8"/>
<circle cx="480.1" cy="638.1" r="4.6" fill="#9a9af8"/>
<circle cx="489.8" cy="641.7" r="4.6" fill="#9a9af8"/>
<circle cx="499.6" cy="644.8" r="4.6" fill="#9a9af8"/>
<circle cx="509.4" cy="647.4" r="4.6" fill="#9a9af8"/>
<circle cx="519.1" cy="649.7" r="4.6" fill="#9a9af8"/>
<circle cx="528.9" cy="651.5" r="4.6" fill="#9a9af8"/>
<circle cx="538.7" cy="653.3" r="4.6" fill="#9a9af8"/>
<circle cx="548.4" cy="655.1" r="4.6" fill="#9a9af8"/>
<circle cx="558.2" cy="657.4" r="4.6" fill="#9a9af8"/>
<circle cx="567.9" cy="659.2" r="4.6" fill="#9a9af8"/>
<circle cx="577.7" cy="661.3" r="4.6" fill="#9a9af8"/>
<circle cx="587.5" cy="663.1" r="4.6" fill="#9a9af8"/>
<circle cx="597.2" cy="663.4" r="4.6" fill="#9a9af8"/>
<circle cx="607.0" cy="664.5" r="4.6" fill="#9a9af8"/>
<circle cx="616.8" cy="665.8" r="4.6" fill="#9a9af8"/>
<circle cx="626.5" cy="664.9" r="4.6" fill="#c8ff00"/>
<circle cx="636.3" cy="664.5" r="4.6" fill="#c8ff00"/>
<circle cx="646.1" cy="663.4" r="4.6" fill="#c8ff00"/>
<circle cx="655.8" cy="662.2" r="4.6" fill="#c8ff00"/>
<circle cx="665.6" cy="660.4" r="4.6" fill="#c8ff00"/>
<circle cx="675.4" cy="658.6" r="4.6" fill="#c8ff00"/>
<circle cx="685.1" cy="658.0" r="4.6" fill="#c8ff00"/>
<circle cx="694.9" cy="655.7" r="4.6" fill="#c8ff00"/>
<circle cx="704.6" cy="653.6" r="4.6" fill="#c8ff00"/>
<circle cx="714.4" cy="651.5" r="4.6" fill="#c8ff00"/>
<circle cx="724.2" cy="649.4" r="4.6" fill="#c8ff00"/>
<circle cx="733.9" cy="647.3" r="4.6" fill="#c8ff00"/>
<circle cx="743.7" cy="645.8" r="4.6" fill="#c8ff00"/>
<circle cx="753.5" cy="644.5" r="4.6" fill="#c8ff00"/>
<circle cx="763.2" cy="642.0" r="4.6" fill="#c8ff00"/>
<circle cx="773.0" cy="639.4" r="4.6" fill="#c8ff00"/>
<circle cx="782.8" cy="636.7" r="4.6" fill="#c8ff00"/>
<circle cx="792.5" cy="633.5" r="4.6" fill="#c8ff00"/>
<circle cx="802.3" cy="630.3" r="4.6" fill="#c8ff00"/>
<circle cx="812.0" cy="627.1" r="4.6" fill="#c8ff00"/>
<circle cx="821.8" cy="623.9" r="4.6" fill="#c8ff00"/>
<circle cx="831.6" cy="621.2" r="4.6" fill="#c8ff00"/>
<circle cx="841.3" cy="618.2" r="4.6" fill="#c8ff00"/>
<circle cx="851.1" cy="616.5" r="4.6" fill="#c8ff00"/>
<circle cx="860.9" cy="615.8" r="4.6" fill="#c8ff00"/>
<circle cx="870.6" cy="612.9" r="4.6" fill="#c8ff00"/>
<circle cx="880.4" cy="612.3" r="4.6" fill="#c8ff00"/>
<circle cx="890.2" cy="611.8" r="4.6" fill="#c8ff00"/>
<circle cx="899.9" cy="610.6" r="4.6" fill="#c8ff00"/>
<circle cx="909.7" cy="610.1" r="4.6" fill="#c8ff00"/>
<circle cx="919.5" cy="609.1" r="4.6" fill="#c8ff00"/>
<circle cx="929.2" cy="609.7" r="4.6" fill="#9a9af8"/>
<circle cx="939.0" cy="610.1" r="4.6" fill="#9a9af8"/>
<circle cx="948.7" cy="610.6" r="4.6" fill="#9a9af8"/>
<circle cx="958.5" cy="611.8" r="4.6" fill="#9a9af8"/>
<circle cx="968.3" cy="611.8" r="4.6" fill="#9a9af8"/>
<circle cx="978.0" cy="612.3" r="4.6" fill="#9a9af8"/>
<circle cx="987.8" cy="614.0" r="4.6" fill="#9a9af8"/>
<circle cx="997.6" cy="616.5" r="4.6" fill="#9a9af8"/>
<circle cx="1007.3" cy="619.0" r="4.6" fill="#9a9af8"/>
<polyline points="1.6,635.0 11.4,632.8 21.2,630.6 30.9,625.8 40.7,622.0 50.5,620.5 60.2,615.1 70.0,614.0 79.7,615.1 89.5,615.1 99.3,618.3 109.0,617.3 118.8,618.2 128.6,619.9 138.3,617.8 148.1,612.8 157.9,608.9 167.6,607.4 177.4,610.1 187.2,611.0 196.9,610.6 206.7,611.9 216.4,615.5 226.2,617.2 236.0,614.6 245.7,610.1 255.5,606.5 265.3,605.3 275.0,602.1 284.8,598.2 294.6,599.4 304.3,607.2 314.1,614.0 323.8,623.0 333.6,630.6 343.4,639.0 353.1,651.5 362.9,657.7 372.7,660.4 382.4,662.2 392.2,664.9 402.0,662.2 411.7,659.5 421.5,656.3 431.3,652.7 441.0,656.3 450.8,658.1 460.5,662.2 470.3,669.3 480.1,679.1 489.8,687.7 499.6,695.2 509.4,697.0 519.1,698.4 528.9,699.1 538.7,699.1 548.4,696.1 558.2,689.8 567.9,685.4 577.7,678.2 587.5,672.0 597.2,663.1 607.0,654.2 616.8,645.3 626.5,637.2 636.3,631.9 646.1,626.5 655.8,622.1 665.6,616.7 675.4,612.3 685.1,612.3 694.9,611.2 704.6,607.6 714.4,602.1 724.2,598.5 733.9,597.0 743.7,597.4 753.5,592.1 763.2,589.0 773.0,586.4 782.8,584.7 792.5,584.7 802.3,585.8 812.0,584.7 821.8,587.9 831.6,594.2 841.3,599.1 851.1,605.5 860.9,612.7 870.6,620.3 880.4,628.2 890.2,630.3 899.9,629.7 909.7,630.9 919.5,632.4 929.2,633.5 939.0,634.5 948.7,634.5 958.5,634.5 968.3,636.7 978.0,639.8 987.8,645.1 997.6,650.4 1007.3,656.4" fill="none" stroke="#00eeff" stroke-width="2.2"/>
<circle cx="1.6" cy="635.0" r="3.5" fill="#00eeff"/>
<circle cx="11.4" cy="632.8" r="3.5" fill="#00eeff"/>
<circle cx="21.2" cy="630.6" r="3.5" fill="#00eeff"/>
<circle cx="30.9" cy="625.8" r="3.5" fill="#00eeff"/>
<circle cx="40.7" cy="622.0" r="3.5" fill="#00eeff"/>
<circle cx="50.5" cy="620.5" r="3.5" fill="#00eeff"/>
<circle cx="60.2" cy="615.1" r="3.5" fill="#00eeff"/>
<circle cx="70.0" cy="614.0" r="3.5" fill="#00eeff"/>
<circle cx="79.7" cy="615.1" r="3.5" fill="#00eeff"/>
<circle cx="89.5" cy="615.1" r="3.5" fill="#00eeff"/>
<circle cx="99.3" cy="618.3" r="3.5" fill="#00eeff"/>
<circle cx="109.0" cy="617.3" r="3.5" fill="#00eeff"/>
<circle cx="118.8" cy="618.2" r="3.5" fill="#00eeff"/>
<circle cx="128.6" cy="619.9" r="3.5" fill="#00eeff"/>
<circle cx="138.3" cy="617.8" r="3.5" fill="#00eeff"/>
<circle cx="148.1" cy="612.8" r="3.5" fill="#00eeff"/>
<circle cx="157.9" cy="608.9" r="3.5" fill="#00eeff"/>
<circle cx="167.6" cy="607.4" r="3.5" fill="#00eeff"/>
<circle cx="177.4" cy="610.1" r="3.5" fill="#00eeff"/>
<circle cx="187.2" cy="611.0" r="3.5" fill="#00eeff"/>
<circle cx="196.9" cy="610.6" r="3.5" fill="#00eeff"/>
<circle cx="206.7" cy="611.9" r="3.5" fill="#00eeff"/>
<circle cx="216.4" cy="615.5" r="3.5" fill="#00eeff"/>
<circle cx="226.2" cy="617.2" r="3.5" fill="#00eeff"/>
<circle cx="236.0" cy="614.6" r="3.5" fill="#00eeff"/>
<circle cx="245.7" cy="610.1" r="3.5" fill="#00eeff"/>
<circle cx="255.5" cy="606.5" r="3.5" fill="#00eeff"/>
<circle cx="265.3" cy="605.3" r="3.5" fill="#00eeff"/>
<circle cx="275.0" cy="602.1" r="3.5" fill="#00eeff"/>
<circle cx="284.8" cy="598.2" r="3.5" fill="#00eeff"/>
<circle cx="294.6" cy="599.4" r="3.5" fill="#00eeff"/>
<circle cx="304.3" cy="607.2" r="3.5" fill="#00eeff"/>
<circle cx="314.1" cy="614.0" r="3.5" fill="#00eeff"/>
<circle cx="323.8" cy="623.0" r="3.5" fill="#00eeff"/>
<circle cx="333.6" cy="630.6" r="3.5" fill="#00eeff"/>
<circle cx="343.4" cy="639.0" r="3.5" fill="#00eeff"/>
<circle cx="353.1" cy="651.5" r="3.5" fill="#00eeff"/>
<circle cx="362.9" cy="657.7" r="3.5" fill="#00eeff"/>
<circle cx="372.7" cy="660.4" r="3.5" fill="#00eeff"/>
<circle cx="382.4" cy="662.2" r="3.5" fill="#00eeff"/>
<circle cx="392.2" cy="664.9" r="3.5" fill="#00eeff"/>
<circle cx="402.0" cy="662.2" r="3.5" fill="#00eeff"/>
<circle cx="411.7" cy="659.5" r="3.5" fill="#00eeff"/>
<circle cx="421.5" cy="656.3" r="3.5" fill="#00eeff"/>
<circle cx="431.3" cy="652.7" r="3.5" fill="#00eeff"/>
<circle cx="441.0" cy="656.3" r="3.5" fill="#00eeff"/>
<circle cx="450.8" cy="658.1" r="3.5" fill="#00eeff"/>
<circle cx="460.5" cy="662.2" r="3.5" fill="#00eeff"/>
<circle cx="470.3" cy="669.3" r="3.5" fill="#00eeff"/>
<circle cx="480.1" cy="679.1" r="3.5" fill="#00eeff"/>
<circle cx="489.8" cy="687.7" r="3.5" fill="#00eeff"/>
<circle cx="499.6" cy="695.2" r="3.5" fill="#00eeff"/>
<circle cx="509.4" cy="697.0" r="3.5" fill="#00eeff"/>
<circle cx="519.1" cy="698.4" r="3.5" fill="#00eeff"/>
<circle cx="528.9" cy="699.1" r="3.5" fill="#00eeff"/>
<circle cx="538.7" cy="699.1" r="3.5" fill="#00eeff"/>
<circle cx="548.4" cy="696.1" r="3.5" fill="#00eeff"/>
<circle cx="558.2" cy="689.8" r="3.5" fill="#00eeff"/>
<circle cx="567.9" cy="685.4" r="3.5" fill="#00eeff"/>
<circle cx="577.7" cy="678.2" r="3.5" fill="#00eeff"/>
<circle cx="587.5" cy="672.0" r="3.5" fill="#00eeff"/>
<circle cx="597.2" cy="663.1" r="3.5" fill="#00eeff"/>
<circle cx="607.0" cy="654.2" r="3.5" fill="#00eeff"/>
<circle cx="616.8" cy="645.3" r="3.5" fill="#00eeff"/>
<circle cx="626.5" cy="637.2" r="3.5" fill="#00eeff"/>
<circle cx="636.3" cy="631.9" r="3.5" fill="#00eeff"/>
<circle cx="646.1" cy="626.5" r="3.5" fill="#00eeff"/>
<circle cx="655.8" cy="622.1" r="3.5" fill="#00eeff"/>
<circle cx="665.6" cy="616.7" r="3.5" fill="#00eeff"/>
<circle cx="675.4" cy="612.3" r="3.5" fill="#00eeff"/>
<circle cx="685.1" cy="612.3" r="3.5" fill="#00eeff"/>
<circle cx="694.9" cy="611.2" r="3.5" fill="#00eeff"/>
<circle cx="704.6" cy="607.6" r="3.5" fill="#00eeff"/>
<circle cx="714.4" cy="602.1" r="3.5" fill="#00eeff"/>
<circle cx="724.2" cy="598.5" r="3.5" fill="#00eeff"/>
<circle cx="733.9" cy="597.0" r="3.5" fill="#00eeff"/>
<circle cx="743.7" cy="597.4" r="3.5" fill="#00eeff"/>
<circle cx="753.5" cy="592.1" r="3.5" fill="#00eeff"/>
<circle cx="763.2" cy="589.0" r="3.5" fill="#00eeff"/>
<circle cx="773.0" cy="586.4" r="3.5" fill="#00eeff"/>
<circle cx="782.8" cy="584.7" r="3.5" fill="#00eeff"/>
<circle cx="792.5" cy="584.7" r="3.5" fill="#00eeff"/>
<circle cx="802.3" cy="585.8" r="3.5" fill="#00eeff"/>
<circle cx="812.0" cy="584.7" r="3.5" fill="#00eeff"/>
<circle cx="821.8" cy="587.9" r="3.5" fill="#00eeff"/>
<circle cx="831.6" cy="594.2" r="3.5" fill="#00eeff"/>
<circle cx="841.3" cy="599.1" r="3.5" fill="#00eeff"/>
<circle cx="851.1" cy="605.5" r="3.5" fill="#00eeff"/>
<circle cx="860.9" cy="612.7" r="3.5" fill="#00eeff"/>
<circle cx="870.6" cy="620.3" r="3.5" fill="#00eeff"/>
<circle cx="880.4" cy="628.2" r="3.5" fill="#00eeff"/>
<circle cx="890.2" cy="630.3" r="3.5" fill="#00eeff"/>
<circle cx="899.9" cy="629.7" r="3.5" fill="#00eeff"/>
<circle cx="909.7" cy="630.9" r="3.5" fill="#00eeff"/>
<circle cx="919.5" cy="632.4" r="3.5" fill="#00eeff"/>
<circle cx="929.2" cy="633.5" r="3.5" fill="#00eeff"/>
<circle cx="939.0" cy="634.5" r="3.5" fill="#00eeff"/>
<circle cx="948.7" cy="634.5" r="3.5" fill="#00eeff"/>
<circle cx="958.5" cy="634.5" r="3.5" fill="#00eeff"/>
<circle cx="968.3" cy="636.7" r="3.5" fill="#00eeff"/>
<circle cx="978.0" cy="639.8" r="3.5" fill="#00eeff"/>
<circle cx="987.8" cy="645.1" r="3.5" fill="#00eeff"/>
<circle cx="997.6" cy="650.4" r="3.5" fill="#00eeff"/>
<circle cx="1007.3" cy="656.4" r="3.5" fill="#00eeff"/>
<polyline points="1.6,629.6 11.4,626.9 21.2,624.2 30.9,617.3 40.7,610.3 50.5,608.2 60.2,603.9 70.0,613.0 79.7,625.8 89.5,628.0 99.3,627.4 109.0,616.2 118.8,609.9 128.6,613.7 138.3,611.0 148.1,601.2 157.9,597.1 167.6,611.4 177.4,622.6 187.2,620.3 196.9,615.5 206.7,613.1 216.4,615.5 226.2,612.8 236.0,607.8 245.7,599.4 255.5,593.2 265.3,599.4 275.0,599.4 284.8,587.8 294.6,605.7 304.3,640.8 314.1,650.6 323.8,647.9 333.6,655.6 343.4,656.8 353.1,663.1 362.9,673.4 372.7,668.1 382.4,664.5 392.2,662.2 402.0,655.1 411.7,640.3 421.5,641.3 431.3,647.4 441.0,671.6 450.8,686.3 460.5,683.0 470.3,692.0 480.1,697.0 489.8,706.8 499.6,704.0 509.4,704.1 519.1,700.9 528.9,691.2 538.7,692.0 548.4,685.4 558.2,673.8 567.9,664.9 577.7,660.4 587.5,655.1 597.2,640.3 607.0,629.2 616.8,622.1 626.5,612.8 636.3,619.4 646.1,627.8 655.8,621.7 665.6,604.3 675.4,592.7 685.1,605.5 694.9,614.4 704.6,603.4 714.4,594.2 724.2,590.0 733.9,585.1 743.7,587.2 753.5,587.9 763.2,586.4 773.0,584.7 782.8,582.1 792.5,585.1 802.3,587.2 812.0,584.3 821.8,596.4 831.6,621.2 841.3,623.9 851.1,620.7 860.9,630.3 870.6,639.4 880.4,638.1 890.2,635.2 899.9,625.0 909.7,623.3 919.5,629.2 929.2,639.4 939.0,646.2 948.7,642.0 958.5,635.2 968.3,632.4 978.0,644.5 987.8,660.0 997.6,675.5 1007.3,683.3" fill="none" stroke="#00f000" stroke-width="2.2"/>
<circle cx="1.6" cy="629.6" r="3.7" fill="#00f000"/>
<circle cx="11.4" cy="626.9" r="3.7" fill="#00f000"/>
<circle cx="21.2" cy="624.2" r="3.7" fill="#00f000"/>
<circle cx="30.9" cy="617.3" r="3.7" fill="#00f000"/>
<circle cx="40.7" cy="610.3" r="3.7" fill="#00f000"/>
<circle cx="50.5" cy="608.2" r="3.7" fill="#00f000"/>
<circle cx="60.2" cy="603.9" r="3.7" fill="#00f000"/>
<circle cx="70.0" cy="613.0" r="3.7" fill="#00f000"/>
<circle cx="79.7" cy="625.8" r="3.7" fill="#00f000"/>
<circle cx="89.5" cy="628.0" r="3.7" fill="#00f000"/>
<circle cx="99.3" cy="627.4" r="3.7" fill="#00f000"/>
<circle cx="109.0" cy="616.2" r="3.7" fill="#00f000"/>
<circle cx="118.8" cy="609.9" r="3.7" fill="#00f000"/>
<circle cx="128.6" cy="613.7" r="3.7" fill="#00f000"/>
<circle cx="138.3" cy="611.0" r="3.7" fill="#00f000"/>
<circle cx="148.1" cy="601.2" r="3.7" fill="#00f000"/>
<circle cx="157.9" cy="597.1" r="3.7" fill="#00f000"/>
<circle cx="167.6" cy="611.4" r="3.7" fill="#00f000"/>
<circle cx="177.4" cy="622.6" r="3.7" fill="#00f000"/>
<circle cx="187.2" cy="620.3" r="3.7" fill="#00f000"/>
<circle cx="196.9" cy="615.5" r="3.7" fill="#00f000"/>
<circle cx="206.7" cy="613.1" r="3.7" fill="#00f000"/>
<circle cx="216.4" cy="615.5" r="3.7" fill="#00f000"/>
<circle cx="226.2" cy="612.8" r="3.7" fill="#00f000"/>
<circle cx="236.0" cy="607.8" r="3.7" fill="#00f000"/>
<circle cx="245.7" cy="599.4" r="3.7" fill="#00f000"/>
<circle cx="255.5" cy="593.2" r="3.7" fill="#00f000"/>
<circle cx="265.3" cy="599.4" r="3.7" fill="#00f000"/>
<circle cx="275.0" cy="599.4" r="3.7" fill="#00f000"/>
<circle cx="284.8" cy="587.8" r="3.7" fill="#00f000"/>
<circle cx="294.6" cy="605.7" r="3.7" fill="#00f000"/>
<circle cx="304.3" cy="640.8" r="3.7" fill="#00f000"/>
<circle cx="314.1" cy="650.6" r="3.7" fill="#00f000"/>
<circle cx="323.8" cy="647.9" r="3.7" fill="#00f000"/>
<circle cx="333.6" cy="655.6" r="3.7" fill="#00f000"/>
<circle cx="343.4" cy="656.8" r="3.7" fill="#00f000"/>
<circle cx="353.1" cy="663.1" r="3.7" fill="#00f000"/>
<circle cx="362.9" cy="673.4" r="3.7" fill="#00f000"/>
<circle cx="372.7" cy="668.1" r="3.7" fill="#00f000"/>
<circle cx="382.4" cy="664.5" r="3.7" fill="#00f000"/>
<circle cx="392.2" cy="662.2" r="3.7" fill="#00f000"/>
<circle cx="402.0" cy="655.1" r="3.7" fill="#00f000"/>
<circle cx="411.7" cy="640.3" r="3.7" fill="#00f000"/>
<circle cx="421.5" cy="641.3" r="3.7" fill="#00f000"/>
<circle cx="431.3" cy="647.4" r="3.7" fill="#00f000"/>
<circle cx="441.0" cy="671.6" r="3.7" fill="#00f000"/>
<circle cx="450.8" cy="686.3" r="3.7" fill="#00f000"/>
<circle cx="460.5" cy="683.0" r="3.7" fill="#00f000"/>
<circle cx="470.3" cy="692.0" r="3.7" fill="#00f000"/>
<circle cx="480.1" cy="697.0" r="3.7" fill="#00f000"/>
<circle cx="489.8" cy="706.8" r="3.7" fill="#00f000"/>
<circle cx="499.6" cy="704.0" r="3.7" fill="#00f000"/>
<circle cx="509.4" cy="704.1" r="3.7" fill="#00f000"/>
<circle cx="519.1" cy="700.9" r="3.7" fill="#00f000"/>
<circle cx="528.9" cy="691.2" r="3.7" fill="#00f000"/>
<circle cx="538.7" cy="692.0" r="3.7" fill="#00f000"/>
<circle cx="548.4" cy="685.4" r="3.7" fill="#00f000"/>
<circle cx="558.2" cy="673.8" r="3.7" fill="#00f000"/>
<circle cx="567.9" cy="664.9" r="3.7" fill="#00f000"/>
<circle cx="577.7" cy="660.4" r="3.7" fill="#00f000"/>
<circle cx="587.5" cy="655.1" r="3.7" fill="#00f000"/>
<circle cx="597.2" cy="640.3" r="3.7" fill="#00f000"/>
<circle cx="607.0" cy="629.2" r="3.7" fill="#00f000"/>
<circle cx="616.8" cy="622.1" r="3.7" fill="#00f000"/>
<circle cx="626.5" cy="612.8" r="3.7" fill="#00f000"/>
<circle cx="636.3" cy="619.4" r="3.7" fill="#00f000"/>
<circle cx="646.1" cy="627.8" r="3.7" fill="#00f000"/>
<circle cx="655.8" cy="621.7" r="3.7" fill="#00f000"/>
<circle cx="665.6" cy="604.3" r="3.7" fill="#00f000"/>
<circle cx="675.4" cy="592.7" r="3.7" fill="#00f000"/>
<circle cx="685.1" cy="605.5" r="3.7" fill="#00f000"/>
<circle cx="694.9" cy="614.4" r="3.7" fill="#00f000"/>
<circle cx="704.6" cy="603.4" r="3.7" fill="#00f000"/>
<circle cx="714.4" cy="594.2" r="3.7" fill="#00f000"/>
<circle cx="724.2" cy="590.0" r="3.7" fill="#00f000"/>
<circle cx="733.9" cy="585.1" r="3.7" fill="#00f000"/>
<circle cx="743.7" cy="587.2" r="3.7" fill="#00f000"/>
<circle cx="753.5" cy="587.9" r="3.7" fill="#00f000"/>
<circle cx="763.2" cy="586.4" r="3.7" fill="#00f000"/>
<circle cx="773.0" cy="584.7" r="3.7" fill="#00f000"/>
<circle cx="782.8" cy="582.1" r="3.7" fill="#00f000"/>
<circle cx="792.5" cy="585.1" r="3.7" fill="#00f000"/>
<circle cx="802.3" cy="587.2" r="3.7" fill="#00f000"/>
<circle cx="812.0" cy="584.3" r="3.7" fill="#00f000"/>
<circle cx="821.8" cy="596.4" r="3.7" fill="#00f000"/>
<circle cx="831.6" cy="621.2" r="3.7" fill="#00f000"/>
<circle cx="841.3" cy="623.9" r="3.7" fill="#00f000"/>
<circle cx="851.1" cy="620.7" r="3.7" fill="#00f000"/>
<circle cx="860.9" cy="630.3" r="3.7" fill="#00f000"/>
<circle cx="870.6" cy="639.4" r="3.7" fill="#00f000"/>
<circle cx="880.4" cy="638.1" r="3.7" fill="#00f000"/>
<circle cx="890.2" cy="635.2" r="3.7" fill="#00f000"/>
<circle cx="899.9" cy="625.0" r="3.7" fill="#00f000"/>
<circle cx="909.7" cy="623.3" r="3.7" fill="#00f000"/>
<circle cx="919.5" cy="629.2" r="3.7" fill="#00f000"/>
<circle cx="929.2" cy="639.4" r="3.7" fill="#00f000"/>
<circle cx="939.0" cy="646.2" r="3.7" fill="#00f000"/>
<circle cx="948.7" cy="642.0" r="3.7" fill="#00f000"/>
<circle cx="958.5" cy="635.2" r="3.7" fill="#00f000"/>
<circle cx="968.3" cy="632.4" r="3.7" fill="#00f000"/>
<circle cx="978.0" cy="644.5" r="3.7" fill="#00f000"/>
<circle cx="987.8" cy="660.0" r="3.7" fill="#00f000"/>
<circle cx="997.6" cy="675.5" r="3.7" fill="#00f000"/>
<circle cx="1007.3" cy="683.3" r="3.7" fill="#00f000"/>
<line x1="28.6" y1="644" x2="28.6" y2="659" stroke="#e8e800" stroke-width="1.3" stroke-dasharray="2 1.5"/>
<line x1="28.6" y1="697" x2="28.6" y2="712" stroke="#e8e800" stroke-width="1.3" stroke-dasharray="2 1.5"/>
<text x="0" y="0" transform="translate(32.9,692.5) rotate(-90)" fill="#e8e800" font-size="14.2" font-family="Liberation Sans" stroke="#e8e800" stroke-width="0.25">UP ?</text>
<line x1="57.5" y1="644" x2="57.5" y2="659" stroke="#9a9af8" stroke-width="1.3" stroke-dasharray="2 1.5"/>
<line x1="57.5" y1="697" x2="57.5" y2="712" stroke="#9a9af8" stroke-width="1.3" stroke-dasharray="2 1.5"/>
<text x="0" y="0" transform="translate(61.8,692.5) rotate(-90)" fill="#9a9af8" font-size="14.2" font-family="Liberation Sans" stroke="#9a9af8" stroke-width="0.25">DN ?</text>
<line x1="135.2" y1="644" x2="135.2" y2="659" stroke="#e8e800" stroke-width="1.3" stroke-dasharray="2 1.5"/>
<line x1="135.2" y1="697" x2="135.2" y2="712" stroke="#e8e800" stroke-width="1.3" stroke-dasharray="2 1.5"/>
<text x="0" y="0" transform="translate(139.5,692.5) rotate(-90)" fill="#e8e800" font-size="14.2" font-family="Liberation Sans" stroke="#e8e800" stroke-width="0.25">UP ?</text>
<line x1="155.2" y1="644" x2="155.2" y2="659" stroke="#9a9af8" stroke-width="1.3" stroke-dasharray="2 1.5"/>
<line x1="155.2" y1="697" x2="155.2" y2="712" stroke="#9a9af8" stroke-width="1.3" stroke-dasharray="2 1.5"/>
<text x="0" y="0" transform="translate(159.5,692.5) rotate(-90)" fill="#9a9af8" font-size="14.2" font-family="Liberation Sans" stroke="#9a9af8" stroke-width="0.25">DN ?</text>
<line x1="291" y1="644" x2="291" y2="659" stroke="#9a9af8" stroke-width="1.3" stroke-dasharray="2 1.5"/>
<line x1="291" y1="697" x2="291" y2="712" stroke="#9a9af8" stroke-width="1.3" stroke-dasharray="2 1.5"/>
<text x="0" y="0" transform="translate(295.3,692.5) rotate(-90)" fill="#9a9af8" font-size="14.2" font-family="Liberation Sans" stroke="#9a9af8" stroke-width="0.25">DN ?</text>
<line x1="565.8" y1="644" x2="565.8" y2="659" stroke="#e8e800" stroke-width="1.3" stroke-dasharray="2 1.5"/>
<line x1="565.8" y1="697" x2="565.8" y2="712" stroke="#e8e800" stroke-width="1.3" stroke-dasharray="2 1.5"/>
<text x="0" y="0" transform="translate(570.0999999999999,692.5) rotate(-90)" fill="#e8e800" font-size="14.2" font-family="Liberation Sans" stroke="#e8e800" stroke-width="0.25">UP ?</text>
</g>
</svg>

<!-- study labels -->
<div class="pl" style="top:570px">80</div>
<div class="a" style="left:1037px;top:597px;width:25px;height:20px;background:#9d9df6;border-radius:3px"></div>
<div class="pl" style="top:600px;left:1040px;color:#18181f">68</div>
<div class="pl" style="top:621px">60</div>
<div class="a" style="left:1037px;top:645px;width:25px;height:19px;background:#fff;border-radius:3px"></div>
<div class="pl" style="top:647px;left:1040px;color:#111">50</div>
<div class="pl" style="top:673px">40</div>
<div class="a" style="left:1037px;top:691px;width:25px;height:20px;background:#90e290;border-radius:3px"></div>
<div class="pl" style="top:694px;left:1040px;color:#111">32</div>

<!-- time labels -->
<div class="tl" style="left:7px">7:30</div>
<div class="tl" style="left:65px">8:00</div>
<div class="tl" style="left:124px">8:30</div>
<div class="tl" style="left:182px">9:00</div>
<div class="tl" style="left:241px">9:30</div>
<div class="tl" style="left:299px;letter-spacing:0.4px">10:00</div>
<div class="tl" style="left:417px;letter-spacing:0.4px">11:00</div>
<div class="tl" style="left:535px;letter-spacing:0.4px">12:00</div>
<div class="tl" style="left:651px">Thu</div>
<div class="tl" style="left:709px">7:00</div>
<div class="tl" style="left:768px">7:30</div>
<div class="tl" style="left:827px">8:00</div>
<div class="tl" style="left:885px">8:30</div>
<div class="tl" style="left:944px">9:00</div>
<div class="tl" style="left:1003px">9:30</div>

<!-- bottom bar -->
<div class="a" style="left:8px;top:755px;width:0;height:0;border-top:4px solid transparent;border-bottom:4px solid transparent;border-right:4px solid #666"></div>
<div class="a" style="left:103px;top:750px;width:43px;height:24px;background:#353535;border:1px solid #3f3f3f;border-bottom:none"></div>
<div class="a" style="left:119px;top:757px;width:11px;height:2.5px;background:#bbb"></div>
<div class="a" style="left:119px;top:762px;width:0;height:0;border-left:5.5px solid transparent;border-right:5.5px solid transparent;border-bottom:7px solid #bbb"></div>
<div class="a" style="left:591px;top:750px;width:185px;height:18px;background:#1c1c1c"></div>
<div class="a" style="left:680px;top:756px;width:1.5px;height:6px;background:#777"></div>
<div class="a" style="left:683px;top:756px;width:1.5px;height:6px;background:#777"></div>
<div class="a" style="left:686px;top:756px;width:1.5px;height:6px;background:#777"></div>
<svg class="a" style="left:778px;top:748px" width="190" height="24" viewBox="778 748 190 24">
<path d="M785 755 L785 763 L781 759 Z" fill="#777"/>
<path d="M800 755 L800 763 L804 759 Z" fill="#777"/>
<path d="M819 753 V766 L813 759.5 Z M829 753 V766 L835 759.5 Z" fill="#c0c0c0"/>
<rect x="821" y="755" width="1.6" height="9" fill="#c0c0c0"/><rect x="824.4" y="755" width="1.6" height="9" fill="#c0c0c0"/>
<circle cx="851" cy="759" r="6.5" fill="none" stroke="#c0c0c0" stroke-width="1.6"/>
<path d="M842 759 H860 M851 750 V768" stroke="#c0c0c0" stroke-width="1.6"/>
<circle cx="877" cy="757" r="7" fill="none" stroke="#c0c0c0" stroke-width="1.8"/>
<path d="M882 762 L888 768" stroke="#c0c0c0" stroke-width="2.2"/>
<path d="M873.5 757 H880.5 M877 753.5 V760.5" stroke="#c0c0c0" stroke-width="1.6"/>
<circle cx="904" cy="757" r="7" fill="none" stroke="#c0c0c0" stroke-width="1.8"/>
<path d="M909 762 L915 768" stroke="#c0c0c0" stroke-width="2.2"/>
<path d="M900.5 757 H907.5" stroke="#c0c0c0" stroke-width="1.8"/>
</svg>
<svg class="a" style="left:922px;top:751px" width="22" height="19" viewBox="0 0 22 19">
<ellipse cx="5" cy="5.2" rx="3.2" ry="3.6" fill="none" stroke="#c8c8c8" stroke-width="2.7"/>
<ellipse cx="15.6" cy="12.6" rx="3.2" ry="3.6" fill="none" stroke="#c8c8c8" stroke-width="2.7"/>
<path d="M15 0.8 L18.8 0.8 L6.8 17.8 L3 17.8 Z" fill="#c8c8c8"/>
</svg>
<div class="tt" style="left:964px;top:750px;font-size:15.5px;line-height:18px;color:#c8c8c8">Drawing set: Default</div>
<div class="tri" style="left:1109px;top:763px"></div>
</body></html>
